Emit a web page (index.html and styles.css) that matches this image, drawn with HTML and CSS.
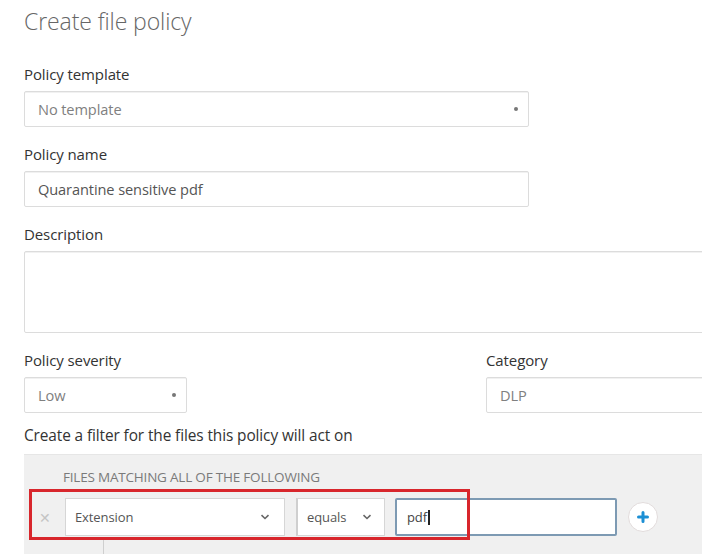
FILE: index.html
```html
<!DOCTYPE html>
<html lang="en">
<head>
<meta charset="utf-8">
<title>Create file policy</title>
<link rel="stylesheet" href="styles.css">
</head>
<body>
<main class="page">
  <h1 class="title">Create file policy</h1>

  <div class="field">
    <label class="label">Policy template</label>
    <div class="control select wide">
      <span class="value">No template</span>
      <span class="dot"></span>
    </div>
  </div>

  <div class="field">
    <label class="label">Policy name</label>
    <div class="control wide">
      <span class="value dark">Quarantine sensitive pdf</span>
    </div>
  </div>

  <div class="field">
    <label class="label">Description</label>
    <div class="control textarea"></div>
  </div>

  <div class="pair">
    <div class="field">
      <label class="label">Policy severity</label>
      <div class="control select small">
        <span class="value">Low</span>
        <span class="dot"></span>
      </div>
    </div>
    <div class="field">
      <label class="label">Category</label>
      <div class="control full">
        <span class="value">DLP</span>
      </div>
    </div>
  </div>

  <div class="filter-title">Create a filter for the files this policy will act on</div>

  <section class="panel">
    <div class="panel-head">FILES MATCHING ALL OF THE FOLLOWING</div>
    <div class="rule">
      <span class="remove">&#x2715;</span>
      <div class="box ext">
        <span>Extension</span>
        <svg class="chev" width="10" height="6" viewBox="0 0 10 6"><path d="M1.5 1.2 L5 4.5 L8.5 1.2" fill="none" stroke="#666" stroke-width="1.6"/></svg>
      </div>
      <div class="box op">
        <span>equals</span>
        <svg class="chev" width="10" height="6" viewBox="0 0 10 6"><path d="M1.5 1.2 L5 4.5 L8.5 1.2" fill="none" stroke="#666" stroke-width="1.6"/></svg>
      </div>
      <div class="box val">
        <span>pdf</span><span class="caret"></span>
      </div>
      <button class="add" type="button" aria-label="Add">
        <svg width="12" height="12" viewBox="0 0 12 12"><path d="M6 1.5 V10.5 M1.5 6 H10.5" stroke="#1c8fd4" stroke-width="3" stroke-linecap="round"/></svg>
      </button>
      <div class="highlight"></div>
    </div>
    <div class="connector"></div>
  </section>
</main>
</body>
</html>
```

FILE: styles.css
```css
html, body {
  margin: 0;
  padding: 0;
  background: #ffffff;
  overflow: hidden;
}

body {
  font-family: "Open Sans", "Noto Sans", "Liberation Sans", sans-serif;
  color: #333;
}

.page {
  width: 760px;
  padding: 5px 0 0 24px;
  display: flex;
  flex-direction: column;
}

.title {
  margin: 0;
  font-size: 23px;
  font-weight: 300;
  line-height: 32px;
  color: #666;
  letter-spacing: -0.1px;
}

.field {
  display: flex;
  flex-direction: column;
  gap: 8px;
}

.title + .field { margin-top: 28px; }
.field + .field { margin-top: 18px; }

.label {
  font-size: 15px;
  line-height: 18px;
  color: #333;
  letter-spacing: -0.1px;
}

.control {
  box-sizing: border-box;
  height: 36px;
  border: 1px solid #dcdcdc;
  border-radius: 2px;
  background: #fff;
  display: flex;
  align-items: center;
  padding: 0 10px 0 13px;
  box-shadow: inset 0 1px 0 #f1f1f1;
}

.wide { width: 505px; }
.small { width: 163px; }
.full { width: 300px; }

.textarea {
  width: 760px;
  height: 82px;
}

.select { justify-content: space-between; }

.value {
  font-size: 14.6px;
  color: #808080;
  letter-spacing: -0.1px;
}
.value.dark { color: #555; }

.dot {
  width: 4px;
  height: 4px;
  border-radius: 50%;
  background: #777;
}

.pair {
  margin-top: 18px;
  display: grid;
  grid-template-columns: 462px 1fr;
}
.pair .field + .field { margin-top: 0; }

.filter-title {
  margin-top: 14px;
  font-size: 15.4px;
  line-height: 18px;
  color: #333;
  letter-spacing: -0.1px;
}

.panel {
  margin-top: 9px;
  background: #f0f0f0;
  border-top: 1px solid #e6e6e6;
  padding: 15px 0 0 0;
  height: 120px;
}

.panel-head {
  margin-left: 39px;
  font-size: 13.5px;
  line-height: 14px;
  color: #7a7a7a;
  letter-spacing: -0.2px;
}

.rule {
  position: relative;
  margin-top: 14px;
  display: flex;
  align-items: center;
  height: 38px;
}

.remove {
  width: 41px;
  text-align: center;
  font-size: 14px;
  color: #c4c4c4;
}

.box {
  box-sizing: border-box;
  height: 38px;
  background: #fff;
  border: 1px solid #d6d6d6;
  display: flex;
  align-items: center;
  font-size: 13px;
  color: #555;
  letter-spacing: -0.1px;
}

.ext {
  width: 220px;
  padding: 0 14px 0 9px;
  justify-content: space-between;
}

.op {
  margin-left: 11px;
  width: 89px;
  padding: 0 12px 0 9px;
  justify-content: space-between;
  border-left: 2px solid #cfcfcf;
}

.val {
  margin-left: 10px;
  width: 222px;
  padding: 0 10px;
  border: 2px solid #7d9ab3;
  border-radius: 2px;
  color: #444;
}

.caret {
  display: inline-block;
  width: 2px;
  height: 15px;
  background: #222;
  margin-left: 1px;
}

.add {
  margin-left: 11px;
  width: 30px;
  height: 30px;
  border-radius: 50%;
  border: 1px solid #e2dcdc;
  background: #fff;
  display: flex;
  align-items: center;
  justify-content: center;
  padding: 0;
}

.highlight {
  position: absolute;
  left: 5px;
  top: -9px;
  width: 435px;
  height: 45px;
  border: 3px solid #d8262c;
  pointer-events: none;
}

.connector {
  margin-top: 4px;
  margin-left: 79px;
  height: 20px;
  border-left: 1px solid #cfcfcf;
}
```
